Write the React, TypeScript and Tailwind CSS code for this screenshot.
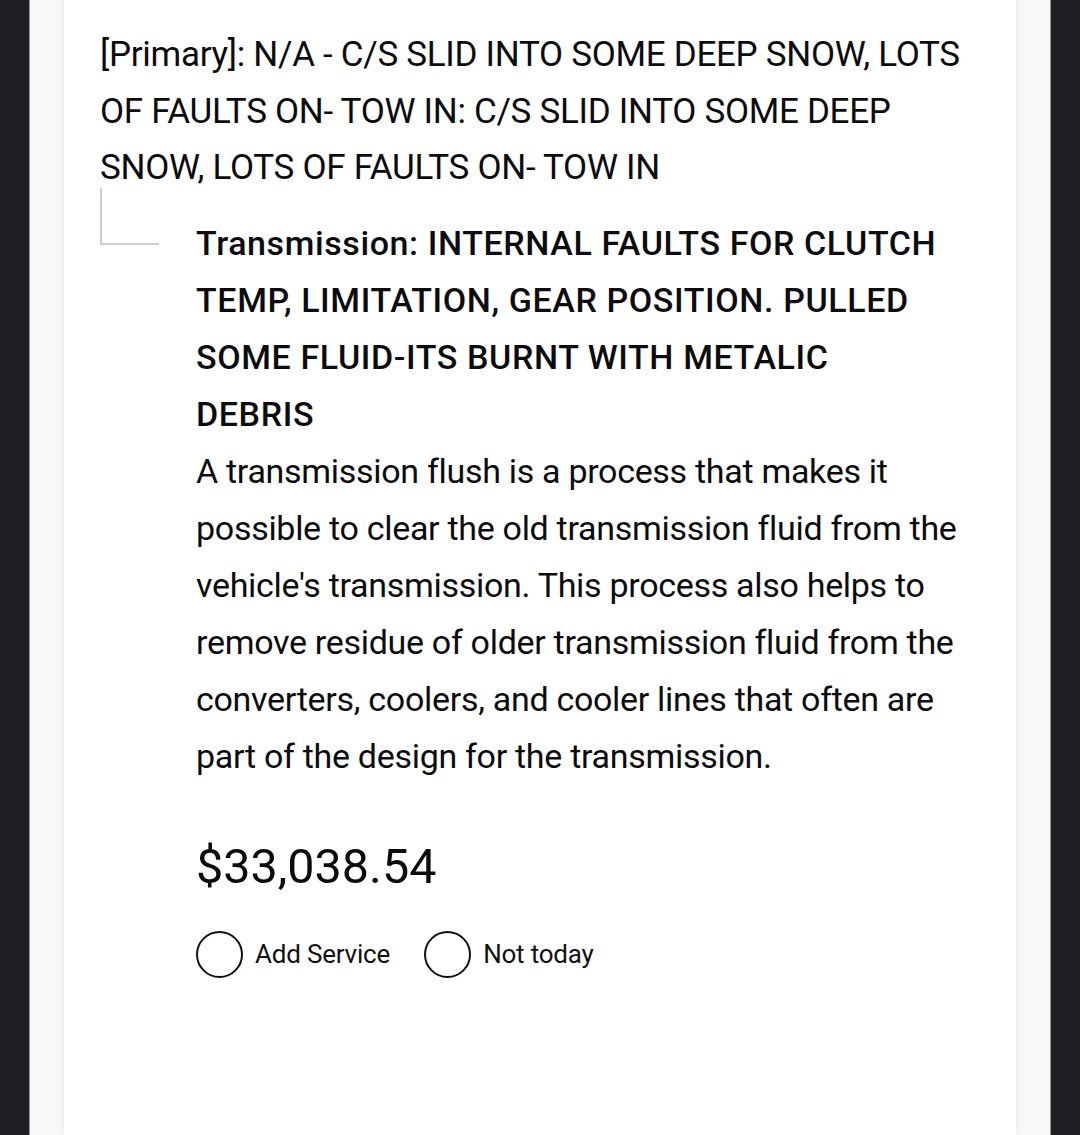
import React from "react";

const primaryLines = [
  "[Primary]: N/A - C/S SLID INTO SOME DEEP SNOW, LOTS",
  "OF FAULTS ON- TOW IN: C/S SLID INTO SOME DEEP",
  "SNOW, LOTS OF FAULTS ON- TOW IN",
];

const transLines = [
  "Transmission: INTERNAL FAULTS FOR CLUTCH",
  "TEMP, LIMITATION, GEAR POSITION. PULLED",
  "SOME FLUID-ITS BURNT WITH METALIC",
  "DEBRIS",
];

const descLines = [
  "A transmission flush is a process that makes it",
  "possible to clear the old transmission fluid from the",
  "vehicle's transmission. This process also helps to",
  "remove residue of older transmission fluid from the",
  "converters, coolers, and cooler lines that often are",
  "part of the design for the transmission.",
];

function Radio({ label }: { label: string }) {
  return (
    <label className="flex items-center gap-[12px]">
      <span className="block h-[47px] w-[47px] rounded-full border-[2.5px] border-[#111]" />
      <span className="text-[26px] leading-none tracking-[-0.2px] text-[#111]">{label}</span>
    </label>
  );
}

export default function App() {
  return (
    <div
      className="h-[1135px] w-full overflow-hidden bg-[#1e1f22] px-[29px] text-[#0c0c0f]"
      style={{ fontFamily: "Roboto, 'Noto Sans', sans-serif" }}
    >
      <div className="h-full border-x border-[#8d8d8f] bg-[#f8f8f8] px-[34px]">
        <div className="h-full bg-white pl-[36px] pr-[30px] pt-[27px] shadow-[0_0_6px_rgba(0,0,0,0.08)]">
          <div className="text-[35px] leading-[56.5px] tracking-[-0.3px]">
            {primaryLines.map((l) => (
              <div key={l} className="whitespace-nowrap">
                {l}
              </div>
            ))}
          </div>

          <div className="mt-[18px] flex">
            <div className="w-[96px] shrink-0">
              <div className="-mt-[27px] h-[57px] w-[59px] border-b-2 border-l-2 border-[#cfcfcf]" />
            </div>
            <div>
              <div className="text-[34px] font-medium leading-[57px] tracking-[0.6px]">
                {transLines.map((l) => (
                  <div key={l} className="whitespace-nowrap">
                    {l}
                  </div>
                ))}
              </div>
              <div className="text-[34px] leading-[57px] tracking-[-0.3px]">
                {descLines.map((l) => (
                  <div key={l} className="whitespace-nowrap">
                    {l}
                  </div>
                ))}
              </div>
              <div className="mt-[53px] text-[48.5px] leading-[57px]">$33,038.54</div>
              <div className="mt-[36px] flex items-center gap-[34px]">
                <Radio label="Add Service" />
                <Radio label="Not today" />
              </div>
            </div>
          </div>
        </div>
      </div>
    </div>
  );
}
